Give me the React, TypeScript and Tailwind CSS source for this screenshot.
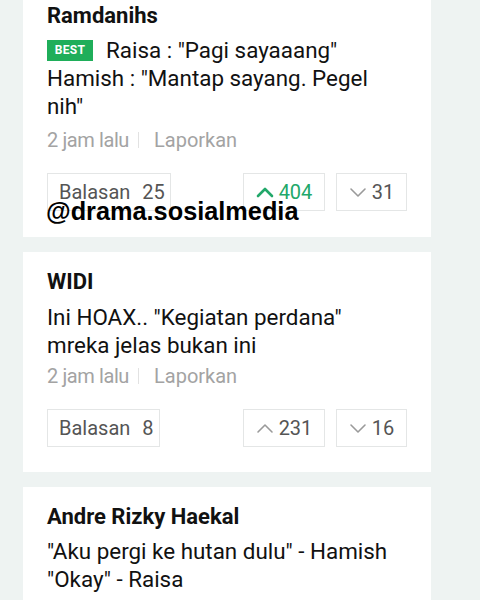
import React from "react";

function Chevron({ up, color, width }: { up: boolean; color: string; width: number }) {
  return (
    <svg width="18" height="12" viewBox="0 0 18 12" fill="none">
      <path
        d={up ? "M2 10 L9 3 L16 10" : "M2 3 L9 10 L16 3"}
        stroke={color}
        strokeWidth={width}
        strokeLinecap="round"
        strokeLinejoin="round"
      />
    </svg>
  );
}

function Buttons({ replies, up, down, active, w }: { replies: number; up: number; down: number; active?: boolean; w: number }) {
  return (
    <div className="flex items-center h-[38px]">
      <div
        className="h-full flex items-center pl-[11px] border border-[#e4e6e6] text-[20px] text-[#555] gap-[12px]"
        style={{ width: w }}
      >
        <span>Balasan</span>
        <span>{replies}</span>
      </div>
      <div className="ml-auto flex gap-[11px] h-full">
        <div
          className={
            "h-full w-[82px] flex items-center justify-center gap-[5px] border border-[#e4e6e6] text-[20px] " +
            (active ? "text-[#22a86a]" : "text-[#555]")
          }
        >
          <Chevron up color={active ? "#22a86a" : "#9a9a9a"} width={active ? 2.6 : 1.6} />
          <span>{up}</span>
        </div>
        <div className="h-full w-[71px] flex items-center justify-center gap-[5px] border border-[#e4e6e6] text-[20px] text-[#555]">
          <Chevron up={false} color="#9a9a9a" width={1.6} />
          <span>{down}</span>
        </div>
      </div>
    </div>
  );
}

function Meta() {
  return (
    <div className="flex items-center text-[20px] text-[#a3a3a3] leading-[26px]">
      <span className="tracking-[-0.4px]">2 jam lalu</span>
      <span className="ml-[9px] mr-[15px] w-px h-[16px] bg-[#e2e2e2]" />
      <span>Laporkan</span>
    </div>
  );
}

export default function App() {
  return (
    <div
      className="w-[480px] h-[600px] overflow-hidden bg-[#eef3f2] relative"
      style={{ fontFamily: "Roboto, 'Noto Sans', sans-serif" }}
    >
      <div className="w-[408px] ml-[23px] flex flex-col gap-[15px] mt-[-14px]">
        {/* Card 1 */}
        <div className="bg-white px-[24px] pt-[16px] pb-[26px]">
          <div className="text-[22px] font-bold leading-[28px] text-[#111]">Ramdanihs</div>
          <div className="mt-[6px] text-[22.4px] leading-[28px] text-[#111]">
            <div className="flex items-center">
              <span className="inline-flex items-center justify-center bg-[#1fae5a] text-white text-[12px] font-bold h-[21px] w-[46px] mr-[13px] tracking-[0.3px]">
                BEST
              </span>
              <span>Raisa : "Pagi sayaaang"</span>
            </div>
            <div>Hamish : "Mantap sayang. Pegel</div>
            <div>nih"</div>
          </div>
          <div className="mt-[7px]">
            <Meta />
          </div>
          <div className="mt-[20px]">
            <Buttons replies={25} up={404} down={31} active w={124} />
          </div>
        </div>

        {/* Card 2 */}
        <div className="bg-white px-[24px] pt-[16px] pb-[25px]">
          <div className="text-[22px] font-bold leading-[28px] text-[#111]">WIDI</div>
          <div className="mt-[7px] text-[22.4px] leading-[28px] text-[#111]">
            <div>Ini HOAX.. "Kegiatan perdana"</div>
            <div>mreka jelas bukan ini</div>
          </div>
          <div className="mt-[4px]">
            <Meta />
          </div>
          <div className="mt-[20px]">
            <Buttons replies={8} up={231} down={16} w={113} />
          </div>
        </div>

        {/* Card 3 */}
        <div className="bg-white px-[24px] pt-[16px] pb-[40px]">
          <div className="text-[22px] font-bold leading-[28px] text-[#111]">Andre Rizky Haekal</div>
          <div className="mt-[6px] text-[22.4px] leading-[28px] text-[#111]">
            <div>"Aku pergi ke hutan dulu" - Hamish</div>
            <div>"Okay" - Raisa</div>
          </div>
        </div>
      </div>

      <div
        className="absolute left-[46px] top-[196px] text-[25.3px] font-bold text-black leading-[30px]"
        style={{ fontFamily: "'Liberation Sans', Arial, sans-serif" }}
      >
        @drama.sosialmedia
      </div>
    </div>
  );
}
